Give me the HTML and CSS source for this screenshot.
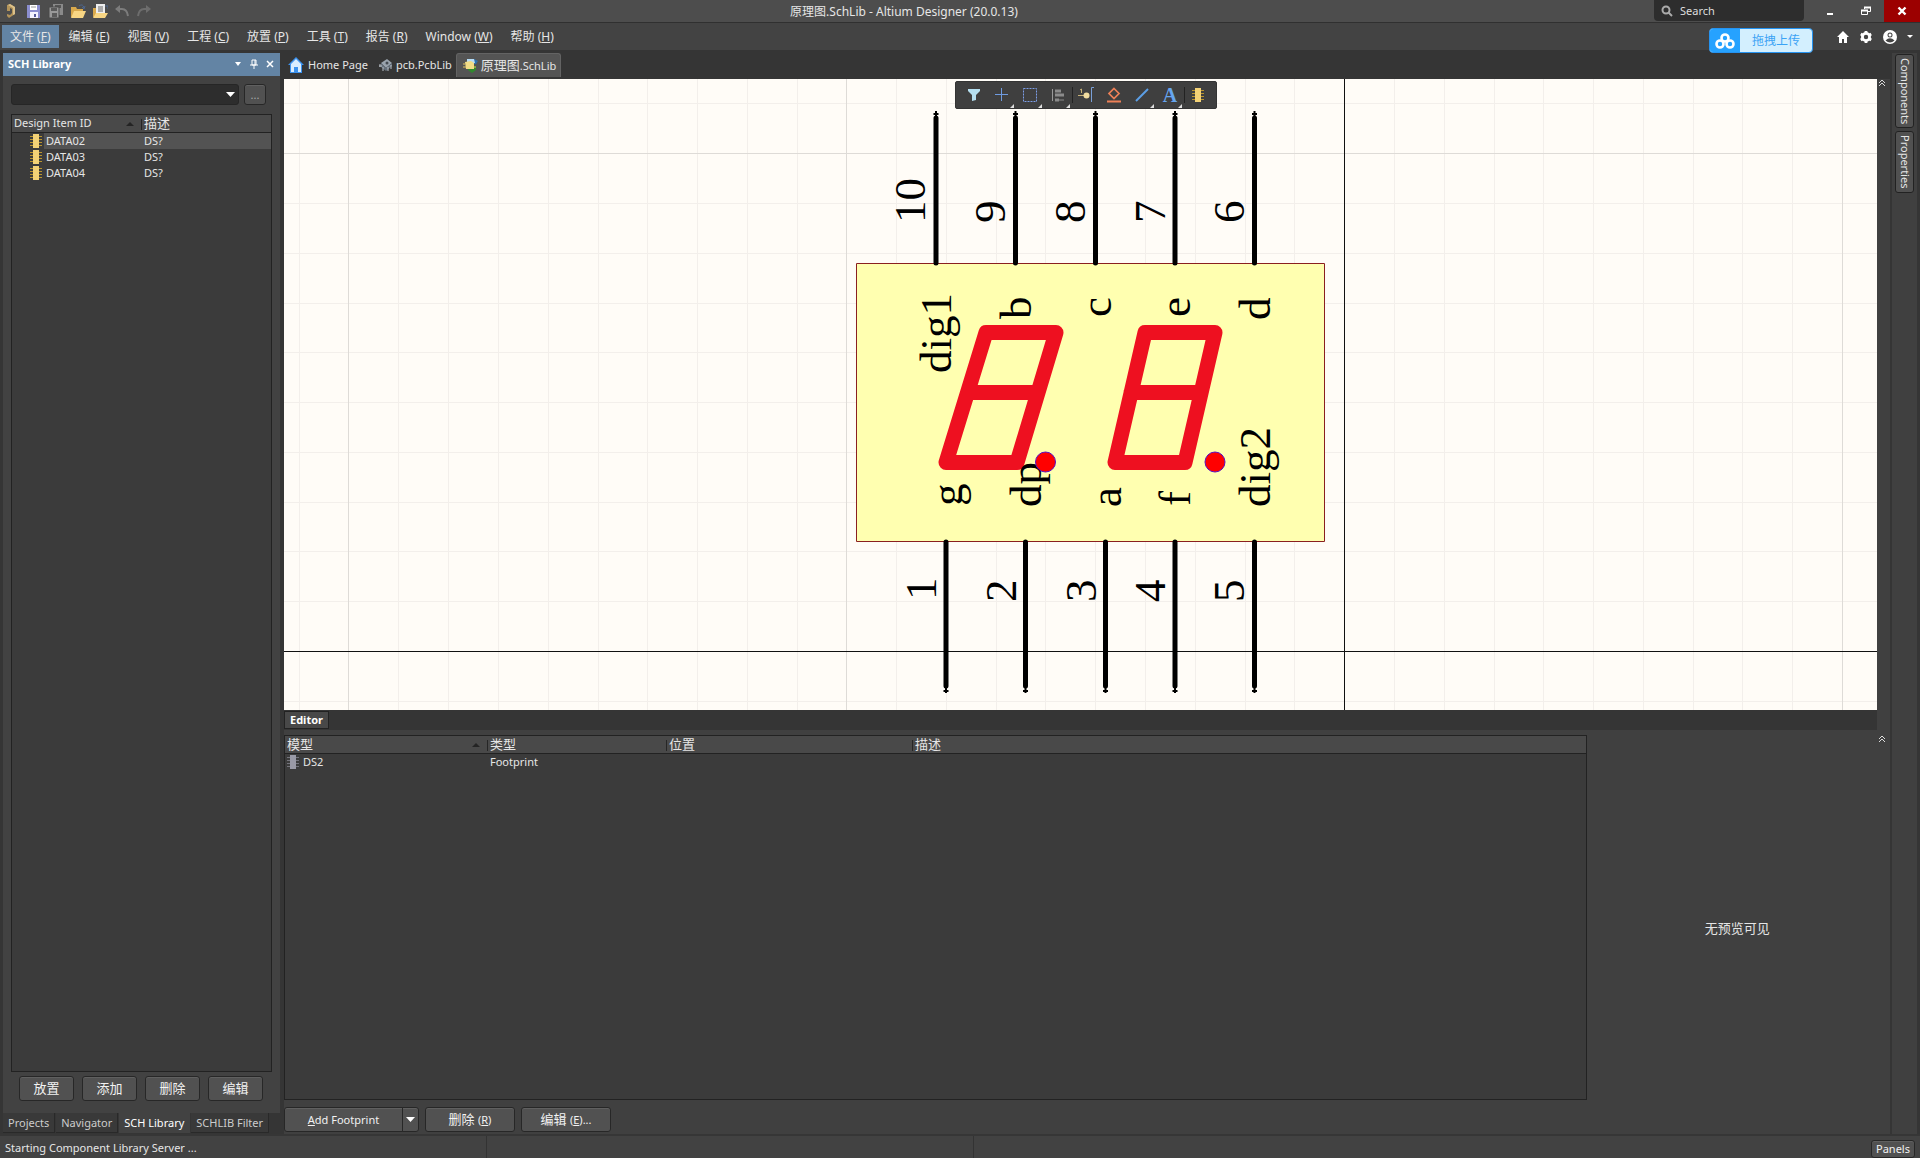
FILE: index.html
```html
<!DOCTYPE html>
<html lang="zh-CN">
<head>
<meta charset="utf-8">
<title>原理图.SchLib - Altium Designer (20.0.13)</title>
<link rel="stylesheet" href="styles.css">
</head>
<body>
<svg class="defs" aria-hidden="true">
  <symbol id="chip" viewBox="0 0 12 14"><path d="M0 2.5h12M0 5.5h12M0 8.5h12M0 11.5h12" stroke="#b89430"/><path d="M3 0h6v14H3z" fill="#f3d276"/></symbol>
  <symbol id="chip-grey" viewBox="0 0 12 14"><path d="M0 2.5h12M0 5.5h12M0 8.5h12M0 11.5h12" stroke="#74747c"/><path d="M3 0h6v14H3z" fill="#9a9aa6"/></symbol>
  <symbol id="up" viewBox="0 0 8 8"><path d="M1 4l3-3 3 3M1 7l3-3 3 3" fill="none" stroke="#ddd"/></symbol>
</svg>

<header class="titlebar">
  <div class="quick">
    <svg class="logo" width="14" height="16" viewBox="0 0 14 16"><path d="M3 6V2l3-1 5 3v7l-6 4-2-2v-2l3 1 2-2V6L6 5v3H3z" fill="#b3945a"/><path d="M6 1l5 3v7l-2 1V5L4 2z" fill="#dcc18a"/></svg>
    <button class="qbtn" aria-label="Save"><svg width="16" height="16" viewBox="0 0 16 16"><path d="M1 2h13v13H1z" fill="#8c8fd0"/><path d="M4 2h7v5H4z" fill="#fff"/><path d="M4 9h8v6H4z" fill="#f4f4ff"/><path d="M8 11h2v3H8z" fill="#555a9b"/><path d="M5 4h5" stroke="#999"/></svg></button>
    <button class="qbtn" aria-label="Save all"><svg width="16" height="16" viewBox="0 0 16 16"><path d="M5 1h10v11H5z" fill="#8a8a8a"/><path d="M7 2h6v3H7z" fill="#555"/><path d="M1 4h10v11H1z" fill="#999" stroke="#4a4a4a"/><path d="M3 5h6v3H3zM4 10h5v4H4z" fill="#5a5a5a"/></svg></button>
    <button class="qbtn" aria-label="Open"><svg width="16" height="16" viewBox="0 0 16 16"><path d="M1 4h5l1 2h6v8H1z" fill="#d9a94c"/><path d="M4 8h12l-3 7H1z" fill="#f8d684"/><path d="M9 3q4-3 5 2M12 4l2 2 1-3" fill="none" stroke="#4d668e"/></svg></button>
    <button class="qbtn" aria-label="Open document"><svg width="16" height="16" viewBox="0 0 16 16"><path d="M1 5h5v9H1z" fill="#d9a94c"/><path d="M4 1h9v11H4z" fill="#eee"/><path d="M6 4h5M6 6h5M6 8h5" stroke="#666"/><path d="M4 10h12l-3 5H1z" fill="#f8d684"/><path d="M13 3h3v3" fill="none" stroke="#4d668e"/></svg></button>
    <button class="qbtn" aria-label="Undo"><svg width="16" height="16" viewBox="0 0 16 16"><path d="M2 6h6q5 0 6 7" fill="none" stroke="#7c7c7c" stroke-width="2"/><path d="M1 6l5-4v8z" fill="#7c7c7c"/></svg></button>
    <button class="qbtn" aria-label="Redo"><svg width="16" height="16" viewBox="0 0 16 16"><path d="M14 6H8q-5 0-6 7" fill="none" stroke="#6d6d6d" stroke-width="2"/><path d="M15 6l-5-4v8z" fill="#6d6d6d"/></svg></button>
  </div>
  <h1 class="apptitle">原理图.SchLib - Altium Designer (20.0.13)</h1>
  <div class="winctl">
    <label class="search"><svg width="12" height="12" viewBox="0 0 12 12"><circle cx="5" cy="5" r="3.5" fill="none" stroke="#aaa" stroke-width="2"/><path d="M7.500 7.500l3.500 3.500" stroke="#aaa" stroke-width="2"/></svg><input type="search" placeholder="Search" aria-label="Search"></label>
    <button class="win" aria-label="Minimize"><svg width="10" height="10" viewBox="0 0 10 10"><path d="M2 8h6" stroke="#fff" stroke-width="2"/></svg></button>
    <button class="win" aria-label="Restore"><svg width="10" height="10" viewBox="0 0 10 10"><path d="M3.500 3V1.500h6v4H7M1 4.500h5.500v4H.5v-4" fill="none" stroke="#fff"/><path d="M3 1.500h7M0 4.500h7" stroke="#fff" stroke-width="2"/></svg></button>
    <button class="win close" aria-label="Close"><svg width="10" height="10" viewBox="0 0 10 10"><path d="M1.500 1.500l7 7M8.500 1.500l-7 7" stroke="#fff" stroke-width="2.400"/></svg></button>
  </div>
</header>

<nav class="menubar">
  <button class="menu active">文件 (<u>F</u>)</button>
  <button class="menu">编辑 (<u>E</u>)</button>
  <button class="menu">视图 (<u>V</u>)</button>
  <button class="menu">工程 (<u>C</u>)</button>
  <button class="menu">放置 (<u>P</u>)</button>
  <button class="menu">工具 (<u>T</u>)</button>
  <button class="menu">报告 (<u>R</u>)</button>
  <button class="menu">Window (<u>W</u>)</button>
  <button class="menu">帮助 (<u>H</u>)</button>
  <div class="account">
    <button aria-label="Home"><svg width="12" height="12" viewBox="0 0 12 12"><path d="M6 0l6 6h-2v6H7V8H5v4H2V6H0z" fill="#fff"/></svg></button>
    <button aria-label="Settings"><svg width="14" height="14" viewBox="0 0 14 14"><circle cx="7" cy="7" r="3.600" fill="none" stroke="#fff" stroke-width="2.800"/><path d="M7 1v2M7 11v2M1.800 4l1.700 1M10.500 9l1.700 1M1.800 10l1.700-1M10.500 5l1.700-1" stroke="#fff" stroke-width="2.800"/></svg></button>
    <button aria-label="Account"><svg width="14" height="14" viewBox="0 0 14 14"><circle cx="7" cy="7" r="7" fill="#fff"/><circle cx="7" cy="5" r="2.500" fill="#434343"/><path d="M2.500 10.500q4.500-4.500 9 0-4.500 4-9 0z" fill="#434343"/><circle cx="7" cy="5" r="1.500" fill="#fff"/></svg></button>
    <button aria-label="Account menu"><svg width="6" height="4" viewBox="0 0 6 4"><path d="M0 0h6L3 3z" fill="#fff"/></svg></button>
  </div>
  <button class="upload"><span class="cloud"><svg width="20" height="16" viewBox="0 0 20 16"><g fill="none" stroke="#fff" stroke-width="2.600"><circle cx="10" cy="5" r="3.500"/><circle cx="5" cy="11" r="3.500"/><circle cx="15" cy="11" r="3.500"/></g></svg></span><span class="uplabel">拖拽上传</span></button>
</nav>

<main class="workspace">
  <aside class="left">
    <section class="panel">
      <header class="panelhead"><h2>SCH Library</h2>
        <button aria-label="Panel menu"><svg width="8" height="8" viewBox="0 0 8 8"><path d="M1 2h6L4 6z" fill="#fff"/></svg></button>
        <button aria-label="Pin"><svg width="8" height="10" viewBox="0 0 8 10"><path d="M2 1h4v5H2zM0 6h8M4 6v4M5 1v5" fill="none" stroke="#fff"/></svg></button>
        <button aria-label="Close panel"><svg width="8" height="8" viewBox="0 0 8 8"><path d="M1 1l6 6M7 1L1 7" stroke="#fff" stroke-width="1.500"/></svg></button>
      </header>
      <div class="panelbody">
        <div class="filter">
          <span class="combo"><select aria-label="Library filter"><option></option></select><svg width="9" height="5" viewBox="0 0 9 5"><path d="M0 0h9L4.500 5z" fill="#fff"/></svg></span>
          <button class="btn more">...</button>
        </div>
        <div class="list">
          <table>
            <colgroup><col class="c-id"><col></colgroup>
            <thead><tr><th class="latin">Design Item ID<svg class="sort" width="8" height="4" viewBox="0 0 8 4"><path d="M0 4l4-4 4 4z"/></svg></th><th>描述</th></tr></thead>
            <tbody>
              <tr class="sel"><td class="item"><svg width="12" height="14"><use href="#chip"/></svg>DATA02</td><td>DS?</td></tr>
              <tr><td class="item"><svg width="12" height="14"><use href="#chip"/></svg>DATA03</td><td>DS?</td></tr>
              <tr><td class="item"><svg width="12" height="14"><use href="#chip"/></svg>DATA04</td><td>DS?</td></tr>
            </tbody>
          </table>
        </div>
        <div class="actions">
          <button class="btn">放置</button><button class="btn">添加</button><button class="btn">删除</button><button class="btn">编辑</button>
        </div>
      </div>
    </section>
    <nav class="paneltabs">
      <button>Projects</button><button>Navigator</button><button class="active">SCH Library</button><button>SCHLIB Filter</button>
    </nav>
  </aside>

  <section class="center">
    <nav class="doctabs">
      <button class="doctab"><svg width="16" height="16" viewBox="0 0 16 16"><path d="M8 0l8 8h-2v8H2V8H0z" fill="#3c92ee"/><path d="M8 2l5 5v8h-3v-5H6v5H3V7z" fill="#d8ecff"/></svg>Home Page</button>
      <button class="doctab"><svg width="15" height="14" viewBox="0 0 15 14"><path d="M3 5l6-4 5 4-6 5z" fill="#99a3ad"/><path d="M3 5l5 5v3L3 9zM14 5v3l-6 5v-3z" fill="#65707c"/><path d="M2 6v3M1 8h3M5 9v4M10 9v4M13 7v4" stroke="#bac1c8"/><circle cx="9" cy="5" r="1.500" fill="#454b52"/></svg>pcb.PcbLib</button>
      <button class="doctab active"><svg width="15" height="15" viewBox="0 0 15 15"><path d="M4 1h7l4 2-2 3H4z" fill="#2b6fae"/><path d="M4 1h7l1 4H4z" fill="#b7ddf6"/><path d="M5 8h8v4l-4 3-4-3z" fill="#31882f"/><path d="M2 4l6-1 3 2v6H3z" fill="#f1dc85"/><path d="M0 6h2M0 9h3M11 9h2" stroke="#dfc35a"/></svg><span><span class="cjk">原理图</span>.SchLib</span></button>
    </nav>

    <div class="sheet">
      <svg class="drawing" viewBox="284 79 1593 631" role="img" aria-label="Schematic symbol">
        <path fill="#fffcf7" d="M284 79h1593v631H284z"/>
        <path class="minor" d="M299.500 79v631M398.500 79v631M448.500 79v631M498.500 79v631M548.500 79v631M598.500 79v631M647.500 79v631M697.500 79v631M747.500 79v631M797.500 79v631M896.500 79v631M946.500 79v631M996.500 79v631M1045.500 79v631M1095.500 79v631M1145.500 79v631M1195.500 79v631M1245.500 79v631M1294.500 79v631M1394.500 79v631M1444.500 79v631M1494.500 79v631M1543.500 79v631M1593.500 79v631M1643.500 79v631M1693.500 79v631M1742.500 79v631M1792.500 79v631M284 103.500h1593M284 203.500h1593M284 253.500h1593M284 303.500h1593M284 352.500h1593M284 402.500h1593M284 452.500h1593M284 502.500h1593M284 551.500h1593M284 601.500h1593M284 701.500h1593"/>
        <path class="major" d="M348.500 79v631M846.500 79v631M1842.500 79v631M284 153.500h1593"/>
        <path class="axis" d="M1344.500 79v631M284 651.500h1593"/>
        <path d="M856.500 263.500h468v278h-468z" fill="#ffffb0" stroke="#8a2020"/>
        <g class="seg">
          <path d="M946 462.500L986 332.500H1056L1017 462.500ZM968 392.500H1037"/>
          <path d="M1115 462.500L1145 332.500H1215L1185 462.500ZM1131 392.500H1200"/>
        </g>
        <path class="pin" d="M936 118V263M1015.500 118V263M1095.500 118V263M1175 118V263M1254.500 118V263M946 542V686M1025.500 542V686M1105.500 542V686M1175 542V686M1254.500 542V686"/>
        <path class="tip" d="M936 111v7M933.500 114h5M1015.500 111v7M1013 114h5M1095.500 111v7M1093 114h5M1175 111v7M1172.500 114h5M1254.500 111v7M1252 114h5M946 686v7M943.500 691h5M1025.500 686v7M1023 691h5M1105.500 686v7M1103 691h5M1175 686v7M1172.500 691h5M1254.500 686v7M1252 691h5"/>
        <g class="pintext">
          <text transform="translate(925 223) rotate(-90)">10</text>
          <text transform="translate(1005 223) rotate(-90)">9</text>
          <text transform="translate(1085 223) rotate(-90)">8</text>
          <text transform="translate(1165 223) rotate(-90)">7</text>
          <text transform="translate(1244 223) rotate(-90)">6</text>
          <text transform="translate(936 600) rotate(-90)">1</text>
          <text transform="translate(1016 602) rotate(-90)">2</text>
          <text transform="translate(1096 602) rotate(-90)">3</text>
          <text transform="translate(1165 602) rotate(-90)">4</text>
          <text transform="translate(1244 602) rotate(-90)">5</text>
          <text transform="translate(951 373) rotate(-90)">dig1</text>
          <text transform="translate(1031 319) rotate(-90)">b</text>
          <text transform="translate(1111 317) rotate(-90)">c</text>
          <text transform="translate(1190 317) rotate(-90)">e</text>
          <text transform="translate(1270 320) rotate(-90)">d</text>
          <text transform="translate(962 506) rotate(-90)">g</text>
          <text transform="translate(1041 507) rotate(-90)">dp</text>
          <text transform="translate(1121 507) rotate(-90)">a</text>
          <text transform="translate(1190 506) rotate(-90)">f</text>
          <text transform="translate(1270 507) rotate(-90)">dig2</text>
        </g>
        <circle class="dot" cx="1045.500" cy="462" r="10"/><circle class="dot" cx="1215" cy="462" r="10"/>
      </svg>
      <div class="toolbar">
        <button aria-label="Filter"><svg width="16" height="16" viewBox="0 0 16 16"><path d="M2 2h12v2l-4 4v5l-4 1V8L2 4z" fill="#b5dff0"/></svg></button>
        <button class="more-tools" aria-label="Move"><svg width="16" height="16" viewBox="0 0 16 16"><path d="M7.500 1v13M1 7.500h13" stroke="#6f9be0"/></svg></button>
        <button class="more-tools" aria-label="Select"><svg width="16" height="16" viewBox="0 0 16 16"><path d="M1.500 1.500h13v13h-13z" fill="none" stroke="#7d9ee8" stroke-dasharray="2 1"/></svg></button>
        <button class="more-tools" aria-label="Align"><svg width="16" height="16" viewBox="0 0 16 16"><path d="M2.500 2v12" stroke="#999"/><path d="M5 4h6M5 8h9M5 13h4" stroke="#8b8b8b" stroke-width="3"/><path d="M9 13h5" stroke="#8b8b8b"/></svg></button>
        <button class="sep" aria-label="Place pin"><svg width="16" height="16" viewBox="0 0 16 16"><path d="M0 8.500h9M2 3l1.500-1v4" fill="none" stroke="#c7b178"/><circle cx="8.500" cy="8.500" r="3" fill="#f1dca0"/><path d="M16 .5h-2.500V15" fill="none" stroke="#7aa0d8"/></svg></button>
        <button aria-label="Place IEEE symbol"><svg width="16" height="16" viewBox="0 0 16 16"><path d="M8 1.500l5 5-5 5-5-5z" fill="none" stroke="#ee8057" stroke-width="1.700"/><path d="M1 14.500h14" stroke="#ee8057" stroke-width="2"/></svg></button>
        <button class="more-tools" aria-label="Place line"><svg width="16" height="16" viewBox="0 0 16 16"><path d="M2 14L14 2" stroke="#5c9fe6" stroke-width="2"/></svg></button>
        <button class="more-tools letter" aria-label="Place text">A</button>
        <button class="sep" aria-label="Place part"><svg width="14" height="14"><use href="#chip"/></svg></button>
      </div>
    </div>

    <div class="editortabs"><button>Editor</button></div>
    <div class="editor">
      <div class="editrow">
        <div class="list models">
          <table>
            <colgroup><col class="c-model"><col class="c-type"><col class="c-place"><col></colgroup>
            <thead><tr><th>模型<svg class="sort" width="8" height="4" viewBox="0 0 8 4"><path d="M0 4l4-4 4 4z"/></svg></th><th>类型</th><th>位置</th><th>描述</th></tr></thead>
            <tbody><tr><td class="model"><svg width="12" height="14"><use href="#chip-grey"/></svg>DS2</td><td>Footprint</td><td></td><td></td></tr></tbody>
          </table>
        </div>
        <div class="preview">无预览可见</div>
      </div>
      <div class="editactions">
        <div class="split"><button class="btn main"><span><u>A</u>dd Footprint</span></button><button class="btn drop" aria-label="More models"><svg width="9" height="5" viewBox="0 0 9 5"><path d="M0 0h9L4.500 5z" fill="#fff"/></svg></button></div>
        <button class="btn wide"><span>删除 <small>(<u>R</u>)</small></span></button>
        <button class="btn wide"><span>编辑 <small>(<u>E</u>)...</small></span></button>
      </div>
    </div>
  </section>

  <div class="gutter">
    <button aria-label="Collapse sheet"><svg width="8" height="8"><use href="#up"/></svg></button>
    <button aria-label="Collapse editor"><svg width="8" height="8"><use href="#up"/></svg></button>
  </div>
  <nav class="side"><button>Components</button><button>Properties</button></nav>
</main>

<footer class="status">
  <span class="cell">Starting Component Library Server ...</span><span class="cell"></span><span class="cell last"></span>
  <button class="btn panels">Panels</button>
</footer>
</body>
</html>
```
FILE: styles.css
```css
* { box-sizing: border-box; }
body {
  margin: 0; min-height: 100vh; display: flex; flex-direction: column;
  background: #353535; color: #e6e6e6;
  font: 11px/16px "Noto Sans", "Noto Sans CJK SC", sans-serif;
}
button, input, select { font: inherit; color: inherit; margin: 0; padding: 0; border: 0; background: none; }
button { display: inline-flex; align-items: center; justify-content: center; white-space: nowrap; }
svg { display: block; flex: none; }
h1, h2 { margin: 0; font-size: 12px; line-height: 16px; }
.defs { position: absolute; width: 0; height: 0; }

/* Title bar */
.titlebar { display: grid; grid-template-columns: 1fr auto 1fr; height: 23px; background: #4d4d4d; border-bottom: 1px solid #303030; }
.quick { display: flex; align-items: center; gap: 6px; padding-left: 4px; }
.logo { margin-right: 2px; }
.apptitle { padding: 4px 112px 0 0; font-weight: 400; }
.winctl { display: flex; justify-content: flex-end; }
.search { display: flex; align-items: center; gap: 7px; width: 150px; height: 21px; padding: 0 7px; margin-right: 8px; background: #2d2d2d; border-radius: 0 0 4px 4px; }
.search input { width: 100%; outline: 0; }
.search input::placeholder { color: #ddd; opacity: 1; }
.win { width: 36px; height: 22px; }
.close { background: #9c0000; }

/* Menu bar */
.menubar { position: relative; display: flex; align-items: center; gap: 2px; height: 27px; padding-left: 2px; background: #434343; font-size: 12px; }
.menu { height: 23px; padding: 0 8px; }
.menu.active { background: #6384a4; }
.account { display: flex; align-items: center; gap: 10px; margin-left: auto; padding-right: 7px; }
.upload { position: absolute; right: 107px; top: 5px; width: 104px; height: 25px; border: 1px solid #2593f0; border-radius: 4px; overflow: hidden; background: #d3effe; color: #3ba3f5; }
.cloud { display: flex; align-items: center; justify-content: center; width: 30px; height: 25px; background: #26a2ff; }
.uplabel { flex: 1; text-align: center; }

/* Library panel */
.workspace { flex: 1; display: flex; min-height: 0; }
.left { display: flex; flex-direction: column; width: 277px; margin: 3px 4px 0 3px; }
.panel { flex: 1; display: flex; flex-direction: column; background: #424242; }
.panelhead { display: flex; align-items: center; gap: 8px; height: 23px; padding: 0 6px 2px 5px; background: #6384a4; color: #fff; }
.panelhead h2 { flex: 1; font-size: 11px; }
.panelbody { flex: 1; display: flex; flex-direction: column; padding: 8px 8px 12px 8px; }
.filter { display: flex; gap: 5px; padding-right: 6px; margin-bottom: 9px; }
.combo { position: relative; flex: 1; display: flex; }
.combo select { width: 100%; height: 21px; appearance: none; background: #2d2d2d; border: 1px solid #262626; border-radius: 3px; }
.combo svg { position: absolute; right: 4px; top: 8px; }
.btn { height: 25px; background: #515151; border: 1px solid #272727; border-radius: 3px; box-shadow: inset 0 1px #606060; color: #f2f2f2; }
.more { width: 22px; height: 21px; color: #aaa; }
.list { flex: 1; background: #3b3b3b; border: 1px solid #222; }
table { width: 100%; border-collapse: separate; border-spacing: 0; table-layout: fixed; }
th { position: relative; height: 18px; padding: 0 2px 1px; text-align: left; font-weight: 400; font-size: 13px; line-height: 16px; background: #494949; border-bottom: 1px solid #222; }
th.latin { font-size: 11px; }
th + th { padding-left: 3px; }
th + th::before { content: ""; position: absolute; left: 0; top: 4px; height: 11px; border-left: 1px solid #262626; }
td { height: 16px; padding: 0 3px; line-height: 16px; }
.sort { position: absolute; right: 7px; top: 7px; fill: #242424; }
.c-id { width: 129px; }
.item svg, .model svg { float: left; margin: 1px 4px 0 0; }
.item { padding-left: 18px; }
.sel { background: linear-gradient(to right, transparent 32px, #535353 32px); }
.actions { display: flex; gap: 8px; padding: 4px 9px 0 8px; }
.actions .btn { flex: 1; font-size: 13px; line-height: 22px; padding-bottom: 1px; }
.paneltabs { display: flex; gap: 1px; height: 21px; }
.paneltabs button { height: 20px; padding: 0 5px; background: #393939; border: 1px solid #292929; border-width: 0 1px 1px 0; color: #ccc; }
.paneltabs .active { background: #424242; color: #fff; border-color: #424242; }

/* Document area */
.center { flex: 1; display: flex; flex-direction: column; min-width: 0; }
.doctabs { display: flex; height: 29px; padding: 3px 0 2px; }
.doctab { gap: 4px; padding: 0 4px; }
.doctab + .doctab { gap: 3px; padding-left: 6px; }
.doctab.active { background: #545454; border: 1px solid #636363; border-bottom: 0; border-radius: 3px 3px 0 0; }
.doctab .cjk { font-size: 13px; }
.sheet { position: relative; }
.drawing { width: 100%; height: auto; }
.minor, .major, .axis { fill: none; shape-rendering: crispEdges; }
.minor { stroke: #f3efeb; }
.major { stroke: #dedbd7; }
.axis { stroke: #111; }
.seg { fill: none; stroke: #ee1020; stroke-width: 15; stroke-linecap: round; stroke-linejoin: round; }
.pin { stroke: #000; stroke-width: 5; stroke-linecap: round; }
.tip { stroke: #000; stroke-width: 2; }
.pintext { font-family: "Liberation Serif", serif; font-size: 45px; fill: #000; }
.dot { fill: #f00; stroke: #5a10c0; }
.toolbar { position: absolute; top: 2px; left: 671px; display: flex; height: 28px; padding: 0 4px; background: #3f3f3f; border: 1px solid #343434; border-radius: 2px; }
.toolbar button { position: relative; width: 28px; height: 26px; }
.more-tools::after { content: ""; position: absolute; right: 2px; bottom: 0; border: 2px solid #ddd; border-top-color: transparent; border-left-color: transparent; }
.toolbar .sep::before { content: ""; position: absolute; left: 0; top: 5px; height: 16px; border-left: 1px solid #222; }
.toolbar .letter { font: bold 20px/24px "Liberation Serif", serif; color: #66a5ee; }

/* Model editor */
.editortabs { height: 20px; padding-top: 1px; }
.editortabs button { height: 18px; padding: 0 5px; background: #484848; border: 1px solid #222; font-weight: 700; color: #fff; }
.editor { flex: 1; display: flex; flex-direction: column; padding: 5px 0 2px; background: #404040; }
.editrow { flex: 1; display: grid; grid-template-columns: 9fr 2fr; }
.preview { display: flex; align-items: center; justify-content: center; font-size: 13px; padding: 20px 0 0 10px; }
.c-model { width: 202px; } .c-type { width: 179px; } .c-place { width: 246px; }
.model { padding-left: 2px; }
.editactions { display: flex; gap: 6px; padding-top: 7px; }
.split { display: flex; width: 135px; }
.main { flex: 1; border-radius: 3px 0 0 3px; }
.drop { width: 17px; margin-left: -1px; border-radius: 0 3px 3px 0; }
.wide { width: 90px; font-size: 13px; }
.wide small { font-size: 11px; }

/* Right edge */
.gutter { display: flex; flex-direction: column; align-items: center; width: 13px; padding: 29px 3px 0 0; background: linear-gradient(#353535 29px, #404040 29px); }
.gutter button { height: 8px; }
.gutter button + button { margin-top: 648px; }
.side { display: flex; flex-direction: column; gap: 3px; width: 30px; padding: 1px 3px 0; background: #404040; border: solid #353535; border-width: 3px 3px 0 2px; }
.side button { writing-mode: vertical-rl; width: 19px; padding: 3px 0; background: #515151; border: 1px solid #222; border-radius: 3px; }

.status { display: flex; height: 24px; background: #424242; border-top: 2px solid #363636; }
.cell { width: 487px; padding: 4px 5px 0; border-right: 1px solid #333; }
.cell.last { flex: 1; border: 0; }
.panels { height: 18px; width: 44px; margin: 4px 5px 0 0; }
```
